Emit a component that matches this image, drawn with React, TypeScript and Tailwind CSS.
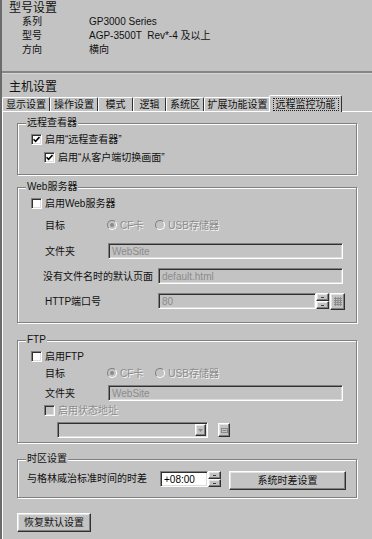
import type { ReactNode } from "react";

const FONT =
  "font-['Liberation_Sans_Narrow','Liberation_Sans','Noto_Sans_CJK_SC',sans-serif]";

// classic 3D edges
const SUNKEN =
  "border border-t-[#808080] border-l-[#808080] border-b-white border-r-white shadow-[inset_1px_1px_0_#303030,inset_-1px_-1px_0_#dcdcdc]";
const RAISED =
  "border border-t-white border-l-white border-b-[#303030] border-r-[#303030] shadow-[inset_-1px_-1px_0_#808080,inset_1px_1px_0_#e4e4e4]";
const DIM = "text-[#8c8c8c] [text-shadow:1px_1px_0_#f4f4f4]";

function Check({ on = false, off = false }: { on?: boolean; off?: boolean }) {
  return (
    <span
      className={`${SUNKEN} w-[11px] h-[11px] shrink-0 flex items-center justify-center ${
        off ? "bg-[#c3c3c3]" : "bg-white"
      }`}
    >
      {on && (
        <svg width="7" height="7" viewBox="0 0 7 7">
          <path d="M0.5 3.2 L2.6 5.3 L6.5 1" stroke="#000" strokeWidth="1.6" fill="none" />
        </svg>
      )}
    </span>
  );
}

function Radio({ dot = false, label }: { dot?: boolean; label: string }) {
  return (
    <span className="flex items-center gap-[3px]">
      <span className="w-[10px] h-[10px] rounded-full border border-t-[#808080] border-l-[#808080] border-b-white border-r-white bg-[#c3c3c3] flex items-center justify-center">
        {dot && <span className="w-[4px] h-[4px] rounded-full bg-[#8c8c8c]" />}
      </span>
      <span className={DIM}>{label}</span>
    </span>
  );
}

function Field({ value, w, white = false }: { value?: string; w: string; white?: boolean }) {
  return (
    <div
      className={`${SUNKEN} ${w} h-[16px] flex items-center px-[3px] ${
        white ? "bg-white text-black" : "bg-[#c3c3c3] text-[#8c8c8c]"
      }`}
    >
      {value}
    </div>
  );
}

function Spin({ h = "h-[16px]" }: { h?: string }) {
  return (
    <div className={`w-[13px] ${h} flex flex-col`}>
      <div className={`${RAISED} flex-1 flex items-center justify-center`}>
        <span className="w-[3px] h-[1px] bg-[#404040]" />
      </div>
      <div className={`${RAISED} flex-1 flex items-center justify-center`}>
        <span className="w-[3px] h-[1px] bg-[#404040]" />
      </div>
    </div>
  );
}

function Group({ title, h, children }: { title: string; h: string; children: ReactNode }) {
  return (
    <div
      className={`relative ml-[14px] w-[340px] ${h} border border-[#808080] shadow-[inset_1px_1px_0_#fff,1px_1px_0_#fff]`}
    >
      <span className="absolute left-[8px] -top-[7px] px-[1px] bg-[#c3c3c3] leading-[12px]">
        {title}
      </span>
      {children}
    </div>
  );
}

export default function App() {
  const tabs = [
    { t: "显示设置", w: "w-[48px]" },
    { t: "操作设置", w: "w-[48px]" },
    { t: "模式", w: "w-[35px]" },
    { t: "逻辑", w: "w-[33px]" },
    { t: "系统区", w: "w-[38px]" },
    { t: "扩展功能设置", w: "w-[67px]" },
  ];

  return (
    <div
      className={`${FONT} w-[372px] h-[539px] overflow-hidden bg-[#c3c3c3] border-l-2 border-[#6b6b6b] text-[10px] text-[#111]`}
    >
      {/* model settings */}
      <div className="h-[71px] pt-[2px] pl-[7px]">
        <div className="text-[12px] leading-[12px]">型号设置</div>
        <div className="pl-[13px] leading-[14px] mt-[1px]">
          {[
            ["系列", "GP3000 Series"],
            ["型号", "AGP-3500T  Rev*-4 及以上"],
            ["方向", "横向"],
          ].map(([k, v]) => (
            <div key={k} className="flex">
              <span className="w-[67px]">{k}</span>
              <span className="whitespace-pre">{v}</span>
            </div>
          ))}
        </div>
      </div>
      <div className="h-[2px] bg-[#858585] -ml-[2px]" />
      <div className="h-[1px] bg-[#d6d6d6] -ml-[2px]" />

      <div className="pl-[7px] mt-[7px] text-[12px] leading-[13px]">主机设置</div>

      {/* tabs */}
      <div className="flex items-end h-[16px] mt-[1px]">
        {tabs.map((t) => (
          <div
            key={t.t}
            className={`${t.w} h-[14px] flex items-center justify-center leading-[12px] border-t border-l border-t-white border-l-white border-r border-r-[#303030] rounded-t-[2px]`}
          >
            {t.t}
          </div>
        ))}
        <div className="relative z-10 -ml-[2px] -mb-px w-[73px] h-[17px] flex items-center justify-center bg-[#c3c3c3] border-t border-l border-t-white border-l-white border-r border-r-[#303030] rounded-t-[2px]">
          <span className="border border-dotted border-[#222] px-[2px] leading-[11px]">
            远程监控功能
          </span>
        </div>
      </div>

      {/* tab panel */}
      <div className="border-t border-l border-white h-[430px] pt-[11px]">
        <Group title="远程查看器" h="h-[52px]">
          <div className="pl-[13px] pt-[8px] flex items-center gap-[3px] h-[14px] box-content">
            <Check on />
            <span>启用“远程查看器”</span>
          </div>
          <div className="pl-[26px] mt-[4px] flex items-center gap-[3px] h-[14px]">
            <Check on />
            <span>启用“从客户端切换画面”</span>
          </div>
        </Group>

        <div className="h-[12px]" />
        <Group title="Web服务器" h="h-[136px]">
          <div className="pl-[13px] pt-[7px] flex items-center gap-[3px] h-[16px] box-content">
            <Check />
            <span>启用Web服务器</span>
          </div>
          <div className="pl-[27px] mt-[6px] flex items-center h-[16px]">
            <span className="w-[62px]">目标</span>
            <div className="flex gap-[12px]">
              <Radio dot label="CF卡" />
              <Radio label="USB存储器" />
            </div>
          </div>
          <div className="pl-[27px] mt-[10px] flex items-center h-[16px]">
            <span className="w-[63px]">文件夹</span>
            <Field value="WebSite" w="w-[235px]" />
          </div>
          <div className="pl-[25px] mt-[9px] flex items-center h-[16px]">
            <span className="w-[115px]">没有文件名时的默认页面</span>
            <Field value="default.html" w="w-[185px]" />
          </div>
          <div className="pl-[27px] mt-[9px] flex items-center h-[16px]">
            <span className="w-[113px]">HTTP端口号</span>
            <Field value="80" w="w-[158px]" />
            <Spin />
            <div className={`${RAISED} w-[15px] h-[17px] ml-px flex items-center justify-center`}>
              <svg width="8" height="9" viewBox="0 0 8 9">
                <path
                  d="M0 1.5H8M0 3.5H8M0 5.5H8M0 7.5H8M1.5 0V9M4 0V9M6.5 0V9"
                  stroke="#8a8a8a"
                  strokeWidth="1"
                />
              </svg>
            </div>
          </div>
        </Group>

        <div className="h-[17px]" />
        <Group title="FTP" h="h-[103px]">
          <div className="pl-[13px] pt-[7px] flex items-center gap-[3px] h-[16px] box-content">
            <Check />
            <span>启用FTP</span>
          </div>
          <div className="pl-[27px] mt-[1px] flex items-center h-[16px]">
            <span className="w-[62px]">目标</span>
            <div className="flex gap-[12px]">
              <Radio dot label="CF卡" />
              <Radio label="USB存储器" />
            </div>
          </div>
          <div className="pl-[27px] mt-[4px] flex items-center h-[16px]">
            <span className="w-[63px]">文件夹</span>
            <Field value="WebSite" w="w-[235px]" />
          </div>
          <div className="pl-[26px] mt-[2px] flex items-center gap-[3px] h-[14px]">
            <Check off />
            <span className={DIM}>启用状态地址</span>
          </div>
          <div className="pl-[39px] mt-[5px] flex items-center h-[16px]">
            <div className={`${SUNKEN} w-[151px] h-[16px] bg-[#c3c3c3] flex justify-end items-stretch p-px`}>
              <div className={`${RAISED} w-[11px] flex items-center justify-center`}>
                <svg width="5" height="3" viewBox="0 0 5 3">
                  <path d="M0 0H5L2.5 3Z" fill="#8a8a8a" />
                </svg>
              </div>
            </div>
            <div className={`${RAISED} w-[12px] h-[14px] ml-[10px] flex items-center justify-center`}>
              <svg width="7" height="5" viewBox="0 0 7 5">
                <rect x="0.5" y="0.5" width="6" height="4" fill="none" stroke="#8a8a8a" />
                <path d="M1.5 2.5H5.5" stroke="#8a8a8a" />
              </svg>
            </div>
          </div>
        </Group>

        <div className="h-[16px]" />
        <Group title="时区设置" h="h-[39px]">
          <div className="pl-[9px] pt-[11px] flex items-start h-[19px] box-content">
            <span className="w-[133px] leading-[16px]">与格林威治标准时间的时差</span>
            <Field value="+08:00" w="w-[48px]" white />
            <Spin />
            <button className={`${RAISED} w-[117px] h-[19px] ml-[8px] bg-[#c3c3c3] leading-[12px]`}>
              系统时差设置
            </button>
          </div>
        </Group>

        <button
          className={`${RAISED} ml-[14px] mt-[15px] w-[74px] h-[19px] bg-[#c3c3c3] leading-[12px]`}
        >
          恢复默认设置
        </button>
      </div>
    </div>
  );
}
